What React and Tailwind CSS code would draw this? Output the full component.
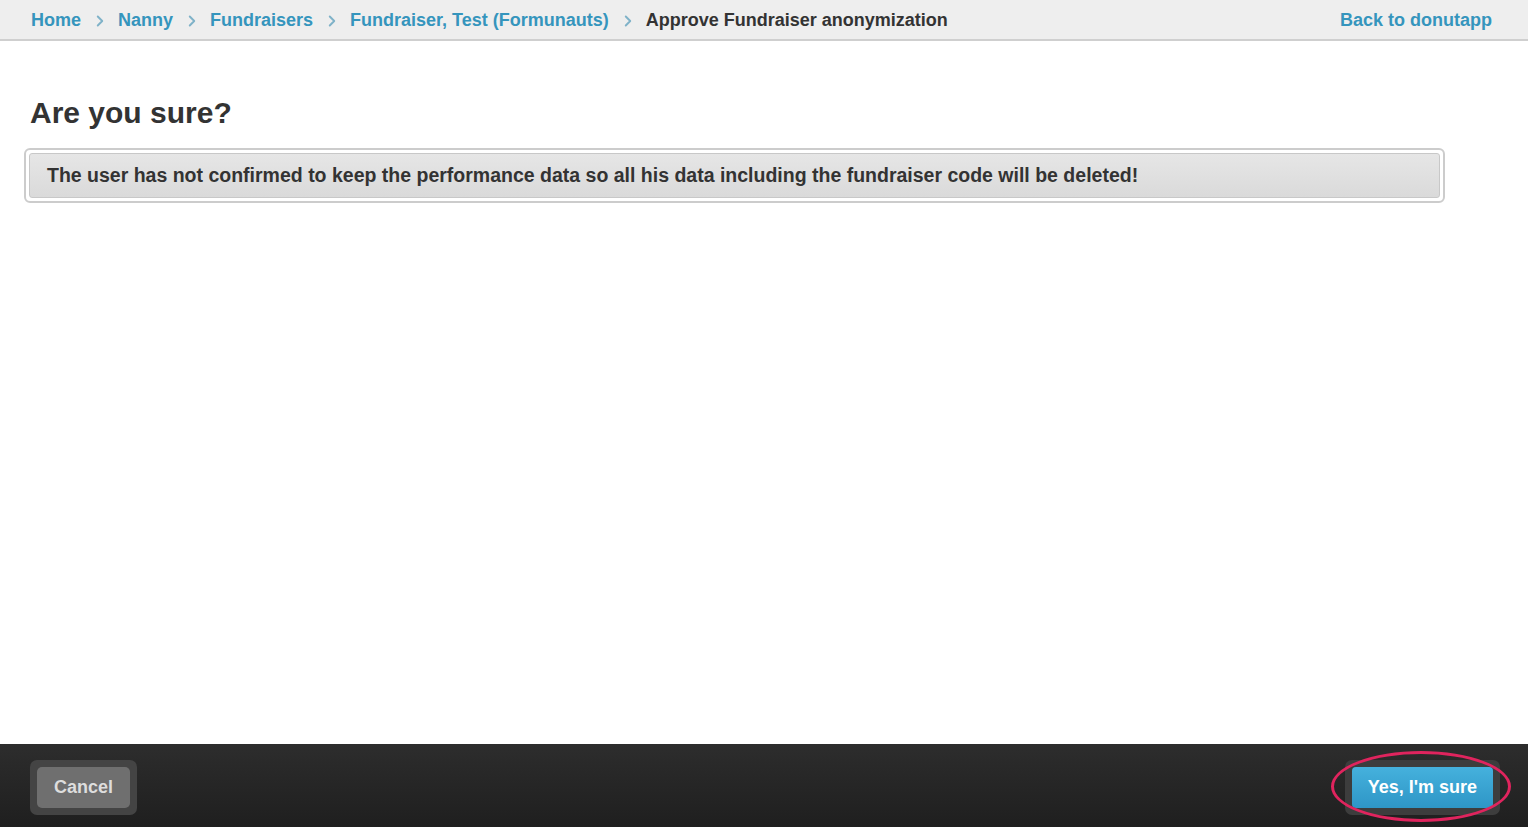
import { ChevronRight } from 'lucide-react';

const CRUMBS = ['Home', 'Nanny', 'Fundraisers', 'Fundraiser, Test (Formunauts)'];

export default function App() {
  return (
    <div className="h-[827px] w-full flex flex-col bg-white font-['Liberation_Sans',Arial,sans-serif] overflow-hidden">
      {/* Breadcrumb bar */}
      <header className="h-[41px] shrink-0 flex items-center bg-[#eeeeee] border-b-2 border-[#cfcfcf] pl-[31px] pr-[36px] pt-[2px]">
        <nav className="flex items-center text-[18px] font-bold">
          {CRUMBS.map((c) => (
            <span key={c} className="flex items-center">
              <a className="text-[#3595bd]">{c}</a>
              <ChevronRight className="ml-[10px] mr-[9px] w-[18px] h-[18px] text-[#7fb2c8]" strokeWidth={2.5} />
            </span>
          ))}
          <span className="text-[#333333]">Approve Fundraiser anonymization</span>
        </nav>
        <a className="ml-auto text-[18px] font-bold text-[#3595bd]">Back to donutapp</a>
      </header>

      {/* Main */}
      <main className="flex-1 pl-[24px] pr-[83px] pt-[55px]">
        <h1 className="pl-[6px] text-[30px] leading-[34px] font-bold text-[#333333]">Are you sure?</h1>
        <div className="mt-[18px] rounded-[6px] border-2 border-[#cccccc] p-[3px]">
          <div className="h-[45px] flex items-center rounded-[3px] border border-[#c8c8c8] bg-gradient-to-b from-[#e6e6e6] to-[#dadada] pl-[17px]">
            <p className="text-[19.5px] font-bold text-[#333333]">
              The user has not confirmed to keep the performance data so all his data including the fundraiser code will be deleted!
            </p>
          </div>
        </div>
      </main>

      {/* Footer actions */}
      <footer className="h-[83px] shrink-0 flex items-center justify-between bg-gradient-to-b from-[#2d2d2d] to-[#1f1f1f] px-[28px] pt-[4px]">
        <div className="rounded-[7px] bg-[#444444] p-[7px] ml-[2px]">
          <button className="h-[41px] px-[17px] rounded-[5px] bg-[#6f6f6f] text-[18px] font-bold text-[#dddddd]">Cancel</button>
        </div>
        <div className="relative rounded-[7px] bg-[#3d3d3d] p-[7px]">
          <button className="h-[41px] px-[16px] rounded-[4px] bg-gradient-to-b from-[#45b1dd] to-[#2e96c6] text-[18px] font-bold text-white">Yes, I'm sure</button>
          <div className="absolute left-[-14px] top-[-9px] w-[180px] h-[71px] rounded-[50%] border-[3px] border-[#e0245e] pointer-events-none" />
        </div>
      </footer>
    </div>
  );
}
